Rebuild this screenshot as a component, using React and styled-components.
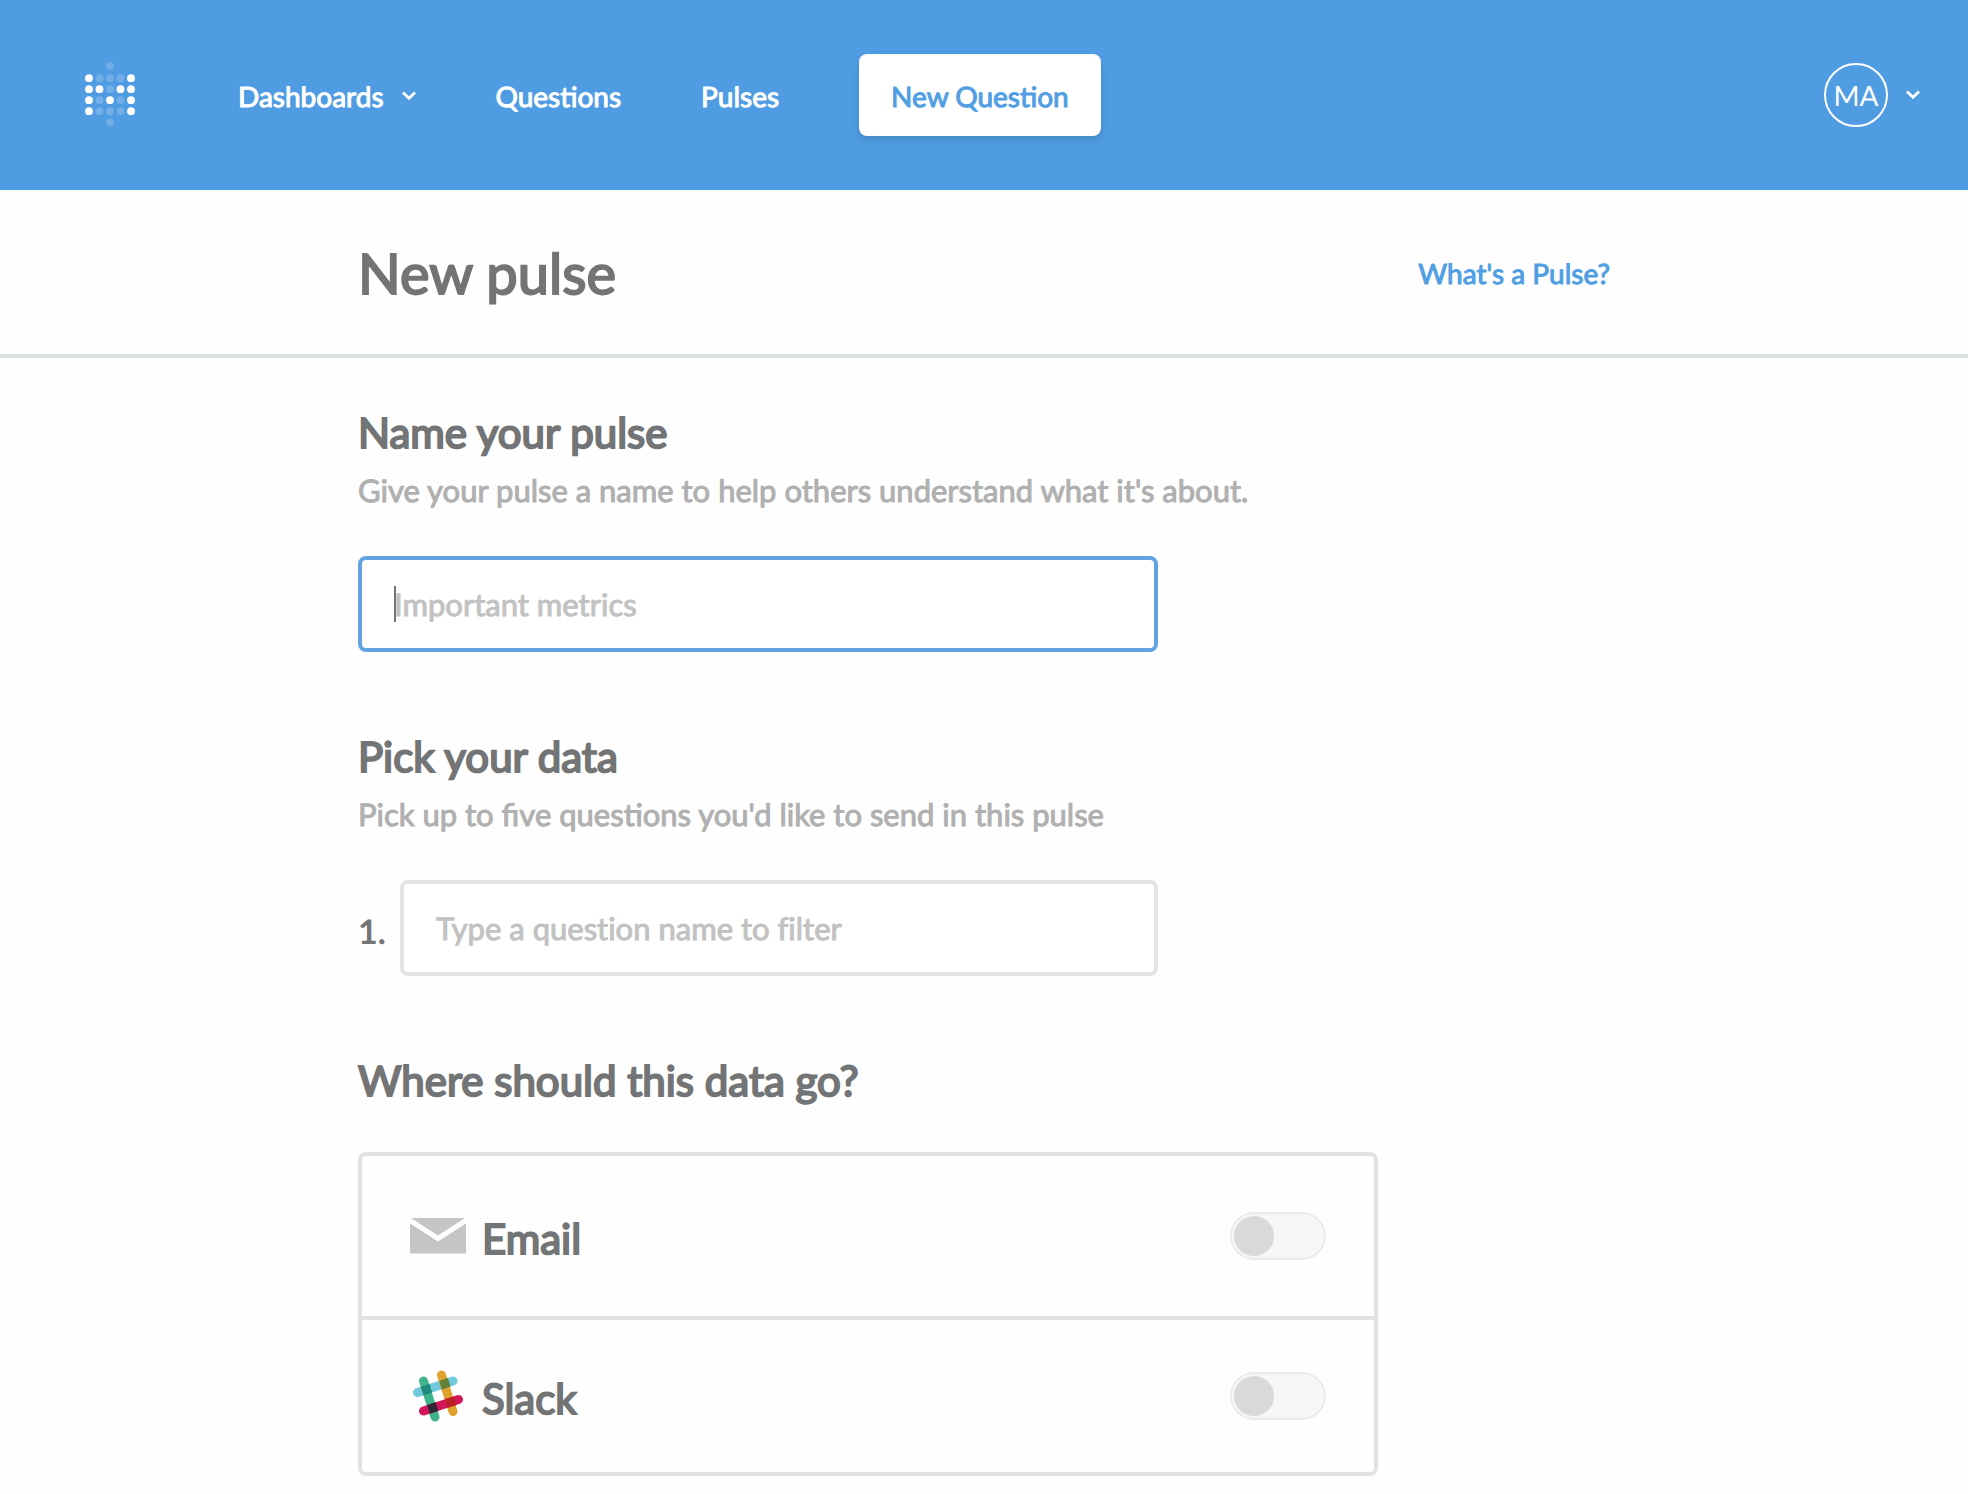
import React, { useState } from 'react';
import styled, { createGlobalStyle, css } from 'styled-components';

const GlobalStyle = createGlobalStyle`
    *, *::before, *::after {
        box-sizing: border-box;
    }

    body {
        margin: 0;
        background: #fefefe;
        color: #727475;
        font-family: Lato, "Open Sans", sans-serif;
        font-size: 31px;
        line-height: 40px;
        text-rendering: geometricPrecision;
    }

    button, input {
        font: inherit;
        text-rendering: inherit;
    }
`

// Opacity of every dot in the logo, row by row: 1 is lit, 0 is dimmed
const LOGO_ROWS = [
    [1, 0, 0, 0, 1],
    [1, 1, 0, 1, 1],
    [1, 0, 1, 0, 1],
    [1, 0, 0, 0, 1],
];

function Logo() {
    return (
        <svg width="50" height="66" viewBox="0 0 50 66" fill="#fff" aria-hidden="true">
            <circle cx="25" cy="3.8" r="3.8" opacity="0.2" />
            {LOGO_ROWS.map((row, y) => row.map((lit, x) => (
                <circle
                    key={`${x}-${y}`}
                    cx={4 + x * 10.5}
                    cy={16.2 + y * 11}
                    r="3.9"
                    opacity={lit ? 1 : 0.2}
                />
            )))}
            <circle cx="25" cy="60.2" r="3.8" opacity="0.2" />
        </svg>
    )
}

function Chevron() {
    return (
        <svg width="14" height="10" viewBox="0 0 14 10" fill="none" stroke="#fff" strokeWidth="2.8" aria-hidden="true">
            <path d="M1 1.4L7 7.2L13 1.4" />
        </svg>
    )
}

function MailIcon() {
    return (
        <svg width="56" height="36" viewBox="0 0 56 36" fill="#c5c5c5" aria-hidden="true">
            <path d="M1 0H55L28 17.5Z" />
            <path d="M0 5.5L28 23.5L56 5.5V35.5H0Z" />
        </svg>
    )
}

function SlackIcon() {
    return (
        <svg width="52" height="52" viewBox="0 0 52 52" fill="none" strokeWidth="9" strokeLinecap="round" aria-hidden="true">
            <path d="M5.5 22.5L41 11" stroke="#70cadb" />
            <path d="M29.5 5L41 41.5" stroke="#e0a22f" />
            <path d="M11.5 11L23 47" stroke="#3eb48a" />
            <path d="M11.5 41L46.5 29.5" stroke="#d3165a" />
            {/* Darker squares where the bars cross */}
            <path d="M8.9 16.7L17.5 14L20.2 22.5L11.7 25.2Z" fill="#1f8a7c" />
            <path d="M27.2 10.8L35.8 8.1L38.5 16.7L29.9 19.4Z" fill="#63803a" />
            <path d="M15.1 35.1L23.6 32.3L26.4 40.9L17.8 43.7Z" fill="#332538" />
            <path d="M33.2 29.1L41.8 26.4L44.5 34.9L35.9 37.7Z" fill="#bc2027" />
        </svg>
    )
}

// A destination for the pulse, with a switch that turns it on
function Channel({ id, name, icon }) {
    return (
        <ChannelRow>
            <ChannelIcon>{icon}</ChannelIcon>
            <ChannelName htmlFor={id}>{name}</ChannelName>
            <Toggle id={id} type="checkbox" role="switch" />
        </ChannelRow>
    )
}

function App() {
    const [name, setName] = useState('');
    const [question, setQuestion] = useState('');

    return (
        <>
            <GlobalStyle />
            <Header>
                <LogoLink href="#" aria-label="Home">
                    <Logo />
                </LogoLink>
                <Nav>
                    <NavButton type="button">
                        Dashboards
                        <Chevron />
                    </NavButton>
                    <NavLink href="#questions">Questions</NavLink>
                    <NavLink href="#pulses">Pulses</NavLink>
                    <NewQuestion type="button">New Question</NewQuestion>
                </Nav>
                <Profile type="button" aria-label="Account menu">
                    <Avatar>MA</Avatar>
                    <Chevron />
                </Profile>
            </Header>

            <TitleBar>
                <TitleContent>
                    <Title>New pulse</Title>
                    <HelpLink href="#help">What's a Pulse?</HelpLink>
                </TitleContent>
            </TitleBar>

            <Form>
                <Section>
                    <SectionTitle as="label" htmlFor="pulse-name">Name your pulse</SectionTitle>
                    <Description>Give your pulse a name to help others understand what it's about.</Description>
                    <Field>
                        <TextInput
                            id="pulse-name"
                            placeholder="Important metrics"
                            value={name}
                            onChange={(e) => setName(e.target.value)}
                            autoFocus
                        />
                    </Field>
                </Section>

                <Section>
                    <SectionTitle>Pick your data</SectionTitle>
                    <Description>Pick up to five questions you'd like to send in this pulse</Description>
                    <Field>
                        <FieldNumber htmlFor="pulse-question">1.</FieldNumber>
                        <TextInput
                            id="pulse-question"
                            placeholder="Type a question name to filter"
                            value={question}
                            onChange={(e) => setQuestion(e.target.value)}
                        />
                    </Field>
                </Section>

                <Section>
                    <SectionTitle>Where should this data go?</SectionTitle>
                    <Channels>
                        <Channel id="channel-email" name="Email" icon={<MailIcon />} />
                        <Channel id="channel-slack" name="Slack" icon={<SlackIcon />} />
                    </Channels>
                </Section>
            </Form>
        </>
    )
}

export default App;

// Regular letters thickened by a thin outline, lighter than the real bold
const thick = css`
    font-weight: 400;
    -webkit-text-stroke: 1px currentColor;
`

// 'Header' is the blue bar with the navigation
const Header = styled.header`
    display: flex;
    align-items: center;
    min-height: 190px;
    padding: 0 48px 0 85px;
    background: #4f9ce2;
    color: #fff;
    font-size: 28px;
    line-height: 36px;
`

const LogoLink = styled.a`
    display: flex;
    margin-right: 103px;
`

const Nav = styled.nav`
    display: flex;
    align-items: center;
    gap: 80px;
`

const NavLink = styled.a`
    ${thick}
    padding-top: 2px;
    color: #fff;
    text-decoration: none;
`

const NavButton = styled.button`
    ${thick}
    display: flex;
    align-items: center;
    gap: 18px;
    padding: 2px 0 0;
    border: 0;
    background: none;
    color: #fff;
    cursor: pointer;
`

const NewQuestion = styled.button`
    ${thick}
    height: 82px;
    padding: 2px 32px 0;
    border: 0;
    border-radius: 8px;
    background: #fff;
    box-shadow: 0 4px 6px rgba(0, 0, 0, 0.12);
    color: #509ee3;
    cursor: pointer;
`

const Profile = styled.button`
    display: flex;
    align-items: center;
    gap: 18px;
    margin-left: auto;
    padding: 0;
    border: 0;
    background: none;
    color: #fff;
    cursor: pointer;
`

const Avatar = styled.span`
    display: flex;
    align-items: center;
    justify-content: center;
    width: 64px;
    height: 64px;
    border: 2px solid #fff;
    border-radius: 50%;
`

// 'TitleBar' holds the page title and is closed off by a line
const TitleBar = styled.div`
    padding: 48px 24px 46px;
    border-bottom: 4px solid #dce2e1;
`

const TitleContent = styled.div`
    display: flex;
    align-items: center;
    justify-content: space-between;
    max-width: 1252px;
    margin: 0 auto;
`

const Title = styled.h1`
    ${thick}
    margin: 0;
    font-size: 56px;
    line-height: 70px;
    -webkit-text-stroke-width: 2px;
`

const HelpLink = styled.a`
    ${thick}
    color: #509ee3;
    font-size: 28px;
    text-decoration: none;
`

const Form = styled.main`
    display: flex;
    flex-direction: column;
    gap: 78px;
    max-width: 1252px;
    margin: 0 auto;
    padding: 48px 0 18px;
`

const Section = styled.section`
    display: flex;
    flex-direction: column;
`

const SectionTitle = styled.h2`
    ${thick}
    margin: 0;
    font-size: 42px;
    line-height: 52px;
    -webkit-text-stroke-width: 2px;
`

const Description = styled.p`
    ${thick}
    margin: 12px 0 0;
    color: #b0b0b0;
`

// 'Field' is a text box with an optional number in front
const Field = styled.div`
    display: flex;
    align-items: center;
    gap: 16px;
    max-width: 800px;
    margin-top: 46px;
`

const FieldNumber = styled.label`
    width: 26px;
    padding-top: 8px;
    font-size: 34px;
    font-weight: 700;
`

const TextInput = styled.input`
    ${thick}
    flex: 1;
    min-width: 0;
    height: 96px;
    padding: 0 32px;
    border: 4px solid #e0e4e3;
    border-radius: 8px;
    outline: none;
    background: #fff;
    color: #727475;
    font-variant-ligatures: none;

    &::placeholder {
        color: #c2c2c2;
        opacity: 1;
    }

    &:focus {
        border-color: #62a3e3;
    }

    /* A steady, wider caret while the box is still empty */
    &:focus:placeholder-shown {
        background: linear-gradient(#727475, #727475) 32px center / 2px 36px no-repeat #fff;
        caret-color: transparent;
    }
`

const Channels = styled.div`
    max-width: 1020px;
    margin-top: 46px;
    border: 4px solid #dfe3e2;
    border-radius: 8px;
`

const ChannelRow = styled.div`
    display: flex;
    align-items: center;
    height: 160px;
    padding: 0 48px;

    & + & {
        height: 156px;
        border-top: 4px solid #dfe3e2;
    }
`

const ChannelIcon = styled.span`
    display: flex;
    justify-content: center;
    width: 56px;
`

const ChannelName = styled.label`
    ${thick}
    margin-left: 16px;
    padding-top: 4px;
    font-size: 42px;
    line-height: 52px;
    -webkit-text-stroke-width: 2px;
`

// 'Toggle' is a checkbox drawn as a sliding switch
const Toggle = styled.input`
    appearance: none;
    display: flex;
    align-items: center;
    width: 96px;
    height: 48px;
    margin: 0 0 0 auto;
    padding: 0 2px;
    border: 2px solid #ebebeb;
    border-radius: 24px;
    background: #f7f7f7;
    cursor: pointer;

    &::before {
        content: "";
        width: 40px;
        height: 40px;
        border-radius: 50%;
        background: #d9d9d9;
    }

    &:checked {
        justify-content: flex-end;
        background: #509ee3;
    }
`
